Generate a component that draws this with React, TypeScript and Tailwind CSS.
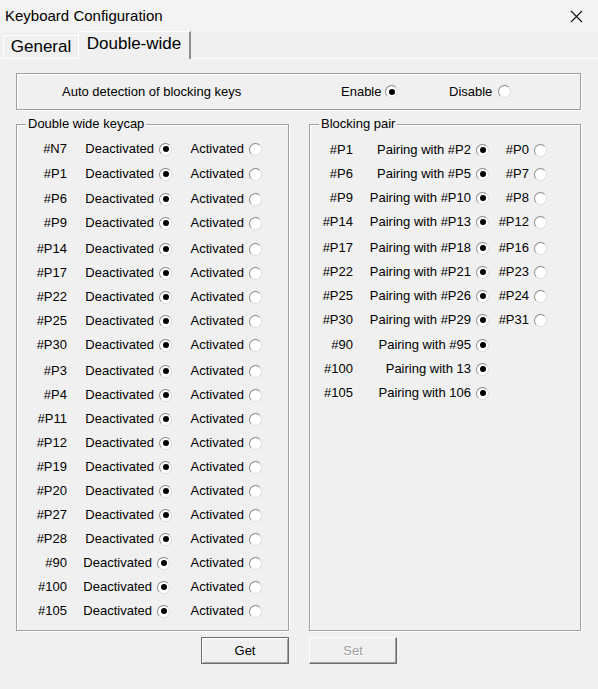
import React from "react";

const MT: Record<number, string> = { 0: "", 1: "mt-px", 2: "mt-[2px]" };

// [label, extra gap above the row]
const keycaps: [string, number][] = [
  ["#N7", 0], ["#P1", 1], ["#P6", 1], ["#P9", 0], ["#P14", 2], ["#P17", 0],
  ["#P22", 0], ["#P25", 0], ["#P30", 0], ["#P3", 2], ["#P4", 0], ["#P11", 0],
  ["#P12", 0], ["#P19", 0], ["#P20", 0], ["#P27", 0], ["#P28", 0], ["#90", 0],
  ["#100", 0], ["#105", 0],
];

const pairs: { key: string; pair: string; alt?: string; gap: number }[] = [
  { key: "#P1", pair: "Pairing with #P2", alt: "#P0", gap: 0 },
  { key: "#P6", pair: "Pairing with #P5", alt: "#P7", gap: 0 },
  { key: "#P9", pair: "Pairing with #P10", alt: "#P8", gap: 0 },
  { key: "#P14", pair: "Pairing with #P13", alt: "#P12", gap: 0 },
  { key: "#P17", pair: "Pairing with #P18", alt: "#P16", gap: 2 },
  { key: "#P22", pair: "Pairing with #P21", alt: "#P23", gap: 0 },
  { key: "#P25", pair: "Pairing with #P26", alt: "#P24", gap: 0 },
  { key: "#P30", pair: "Pairing with #P29", alt: "#P31", gap: 0 },
  { key: "#90", pair: "Pairing with #95", gap: 1 },
  { key: "#100", pair: "Pairing with 13", gap: 0 },
  { key: "#105", pair: "Pairing with 106", gap: 0 },
];

function Radio({ checked }: { checked?: boolean }) {
  return (
    <span className="flex h-[13px] w-[13px] shrink-0 items-center justify-center rounded-full border border-[#8a8a8a] border-r-[#dcdcdc] border-b-[#dcdcdc] bg-white">
      {checked ? <span className="h-[6px] w-[6px] rounded-full bg-black" /> : null}
    </span>
  );
}

function Choice({ label, checked, className }: { label: string; checked?: boolean; className: string }) {
  return (
    <div className={`flex items-center justify-end gap-[5px] ${className}`}>
      <span>{label}</span>
      <Radio checked={checked} />
    </div>
  );
}

function Group({ title, className, children }: { title: string; className: string; children: React.ReactNode }) {
  return (
    <div
      className={`relative h-[507px] border border-[#a0a0a0] shadow-[inset_1px_1px_0_#fff,1px_1px_0_#fff] ${className}`}
    >
      <span className="absolute -top-[9px] left-[9px] bg-[#f0f0f0] px-[2px] leading-[16px]">{title}</span>
      {children}
    </div>
  );
}

export default function App() {
  return (
    <div className="relative h-[689px] w-[598px] overflow-hidden bg-[#f0f0f0] font-['Liberation_Sans',Arial,sans-serif] text-[13px] text-black">
      {/* title bar */}
      <div className="flex h-[32px] items-center justify-between bg-[#f3f3f3] pl-[5px] pr-[14px]">
        <span className="text-[15px]">Keyboard Configuration</span>
        <svg width="13" height="13" viewBox="0 0 13 13" className="mr-[1px]">
          <path d="M1 1 L12 12 M12 1 L1 12" stroke="#111" strokeWidth="1.1" />
        </svg>
      </div>

      {/* tabs */}
      <div className="flex h-[26px] items-end pl-[3px] text-[17px]">
        <div className="flex h-[23px] w-[75px] items-center justify-center border-t border-l border-white">General</div>
        <div className="relative z-10 -mb-px flex h-[28px] w-[113px] items-center justify-center border-t border-l border-white border-r-2 border-r-[#8c8c8c] bg-[#f0f0f0] pb-[3px]">
          Double-wide
        </div>
      </div>

      {/* panel */}
      <div className="border-t border-white pt-[14px]">
        <div className="ml-[16px] flex h-[37px] w-[565px] items-center border border-[#a0a0a0] shadow-[inset_1px_1px_0_#fff,1px_1px_0_#fff]">
          <span className="w-[324px] pl-[45px]">Auto detection of blocking keys</span>
          <div className="flex w-[108px] items-center gap-[4px]">
            <span>Enable</span>
            <Radio checked />
          </div>
          <div className="flex items-center gap-[6px]">
            <span>Disable</span>
            <Radio />
          </div>
        </div>

        <div className="mt-[14px] flex pl-[16px]">
          <Group title="Double wide keycap" className="w-[273px] pt-[12px]">
            {keycaps.map(([k, gap], i) => {
              const late = i >= 17;
              return (
                <div key={k} className={`flex h-6 items-center ${MT[gap]}`}>
                  <span className="w-[50px] text-right">{k}</span>
                  {late ? (
                    <Choice label="Deactivated" checked className="ml-[19px] w-[84px]" />
                  ) : (
                    <Choice label="Deactivated" checked className="ml-[21px] w-[84px]" />
                  )}
                  {late ? (
                    <Choice label="Activated" className="ml-[21px] w-[71px]" />
                  ) : (
                    <Choice label="Activated" className="ml-[19px] w-[71px]" />
                  )}
                </div>
              );
            })}
          </Group>

          <Group title="Blocking pair" className="ml-[20px] w-[272px] pt-[13px]">
            {pairs.map((p) => (
              <div key={p.key} className={`flex h-6 items-center ${MT[p.gap]}`}>
                <span className="w-[43px] text-right">{p.key}</span>
                <Choice label={p.pair} checked className="ml-[10px] w-[126px]" />
                {p.alt ? <Choice label={p.alt} className="ml-[6px] w-[52px]" /> : null}
              </div>
            ))}
          </Group>
        </div>

        <div className="mt-[6px] flex pl-[16px]">
          <div className="flex w-[273px] justify-end">
            <button className="h-[27px] w-[88px] border border-[#6d6d6d] bg-[#f0f0f0] shadow-[inset_1px_1px_0_#fff,inset_-1px_-1px_0_#a0a0a0]">
              Get
            </button>
          </div>
          <div className="ml-[20px] flex w-[272px]">
            <button
              disabled
              className="h-[27px] w-[88px] border border-white border-r-[#6d6d6d] border-b-[#6d6d6d] bg-[#f0f0f0] text-[#a0a0a0] shadow-[inset_-1px_-1px_0_#a0a0a0] [text-shadow:1px_1px_0_#fff]"
            >
              Set
            </button>
          </div>
        </div>
      </div>
    </div>
  );
}
